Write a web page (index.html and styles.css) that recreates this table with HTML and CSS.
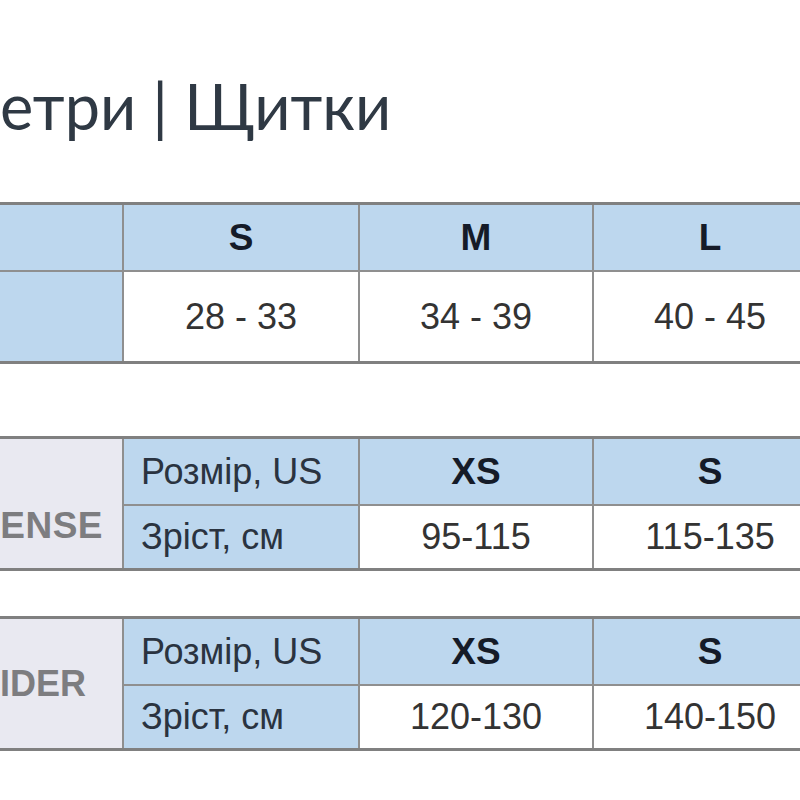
FILE: index.html
```html
<!DOCTYPE html>
<html lang="uk">
<head>
<meta charset="utf-8">
<title>Розмірні параметри | Щитки</title>
<link rel="stylesheet" href="styles.css">
</head>
<body>
<h1 class="title">етри | Щитки</h1>

<div class="sheet sheet-a">
  <div class="cell label-blue"></div>
  <div class="cell head">S</div>
  <div class="cell head">M</div>
  <div class="cell head">L</div>
  <div class="cell label-blue"></div>
  <div class="cell val">28 - 33</div>
  <div class="cell val">34 - 39</div>
  <div class="cell val">40 - 45</div>
</div>

<div class="sheet sheet-b">
  <div class="cell brand brand-low">ENSE</div>
  <div class="cell rowlabel">Розмір, US</div>
  <div class="cell head">XS</div>
  <div class="cell head">S</div>
  <div class="cell rowlabel">Зріст, см</div>
  <div class="cell val">95-115</div>
  <div class="cell val">115-135</div>
</div>

<div class="sheet sheet-c">
  <div class="cell brand brand-mid">IDER</div>
  <div class="cell rowlabel">Розмір, US</div>
  <div class="cell head">XS</div>
  <div class="cell head">S</div>
  <div class="cell rowlabel">Зріст, см</div>
  <div class="cell val">120-130</div>
  <div class="cell val">140-150</div>
</div>
</body>
</html>
```

FILE: styles.css
```css
html, body {
  margin: 0;
  padding: 0;
  background: #ffffff;
}

body {
  width: 800px;
  height: 800px;
  overflow: hidden;
  font-family: "Liberation Sans", Arial, sans-serif;
}

.title {
  margin: 74px 0 0 0;
  font-family: "Lato", "Open Sans", sans-serif;
  font-weight: 400;
  font-size: 63px;
  line-height: 64px;
  height: 64px;
  color: #2f3944;
  white-space: nowrap;
}

.sheet {
  display: grid;
  grid-template-columns: 122px 234px 232px 232px;
  gap: 2px;
  background: #8f8f8f;
  border-top: 3px solid #808080;
  border-bottom: 3px solid #808080;
  width: max-content;
}

.sheet-a {
  margin-top: 64px;
  grid-template-rows: 65px 89px;
}

.sheet-b {
  margin-top: 72px;
  grid-template-rows: 65px 62px;
}

.sheet-c {
  margin-top: 45px;
  grid-template-rows: 65px 62px;
}

.cell {
  display: flex;
  align-items: center;
  justify-content: center;
  font-size: 36px;
  white-space: nowrap;
}

.head {
  background: #bdd7ee;
  color: #151b28;
  font-weight: 700;
  font-size: 37px;
}

.val {
  background: #ffffff;
  color: #333333;
}

.label-blue {
  background: #bdd7ee;
}

.rowlabel {
  background: #bdd7ee;
  color: #2a3340;
  justify-content: flex-start;
  padding-left: 17px;
}

.brand {
  grid-row: span 2;
  background: #e9e9f1;
  color: #7d7d80;
  font-weight: 700;
  justify-content: flex-end;
}

.brand-low {
  align-items: flex-end;
  padding-bottom: 21px;
  padding-right: 19px;
  font-size: 37px;
  letter-spacing: 0.5px;
}

.brand-mid {
  padding-right: 36px;
}
```
